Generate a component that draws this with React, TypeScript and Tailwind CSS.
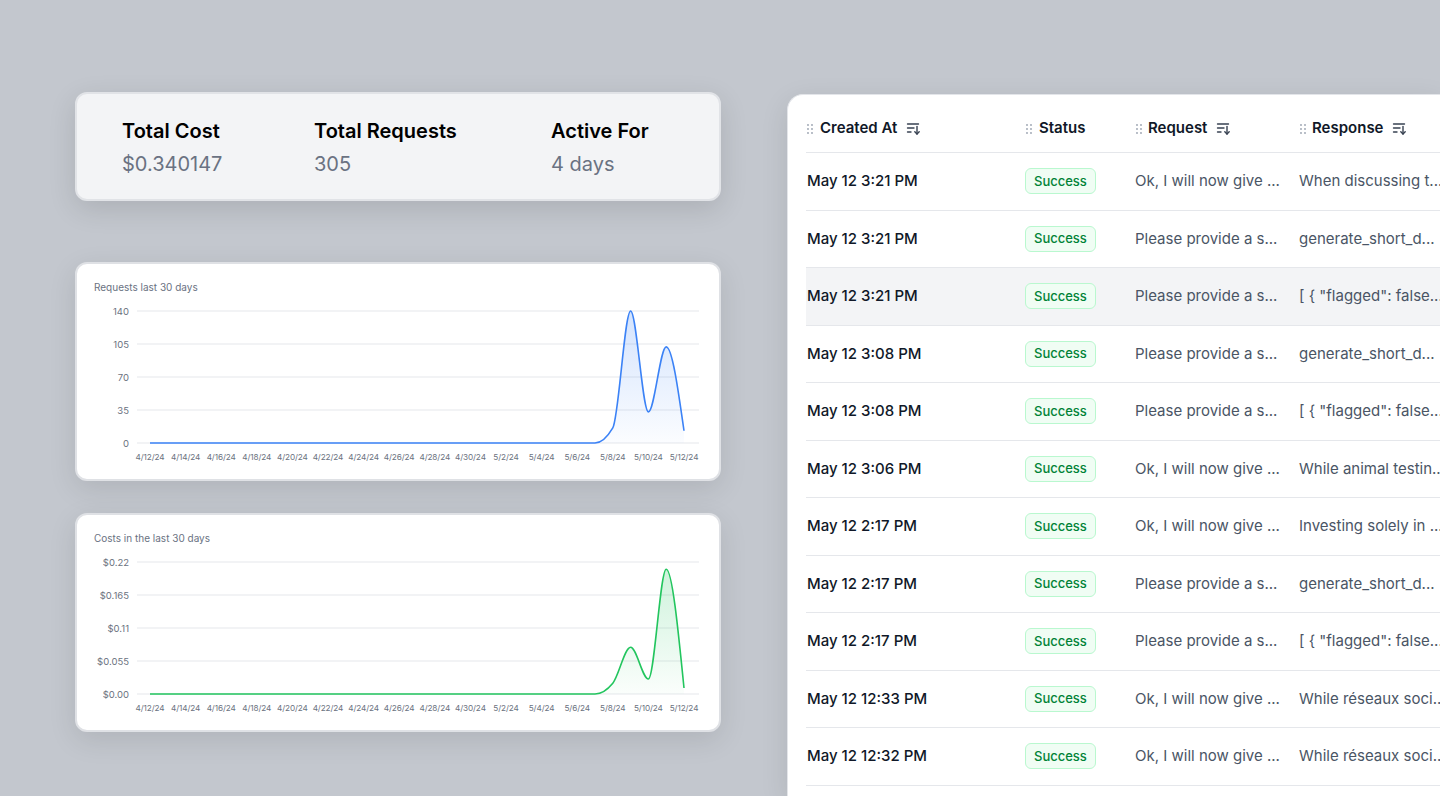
import React from 'react';

type Pt = [number, number];

// monotone cubic, same idea as d3's curveMonotoneX
function monotonePath(pts: Pt[]) {
    const n = pts.length;
    const s: number[] = [];
    for (let i = 0; i < n - 1; i++) s.push((pts[i + 1][1] - pts[i][1]) / (pts[i + 1][0] - pts[i][0]));
    const t: number[] = new Array(n).fill(0);
    for (let i = 1; i < n - 1; i++) {
        const s0 = s[i - 1], s1 = s[i];
        const h0 = pts[i][0] - pts[i - 1][0], h1 = pts[i + 1][0] - pts[i][0];
        const p = (s0 * h1 + s1 * h0) / (h0 + h1);
        t[i] = (Math.sign(s0) + Math.sign(s1)) * Math.min(Math.abs(s0), Math.abs(s1), 0.5 * Math.abs(p)) || 0;
    }
    t[0] = (3 * s[0] - t[1]) / 2;
    t[n - 1] = (3 * s[n - 2] - t[n - 2]) / 2;
    let d = `M${pts[0][0]},${pts[0][1]}`;
    for (let i = 0; i < n - 1; i++) {
        const dx = (pts[i + 1][0] - pts[i][0]) / 3;
        d += ` C${pts[i][0] + dx},${pts[i][1] + dx * t[i]} ${pts[i + 1][0] - dx},${pts[i + 1][1] - dx * t[i + 1]} ${pts[i + 1][0]},${pts[i + 1][1]}`;
    }
    return d;
}

const dateLabels = ['4/12/24', '4/14/24', '4/16/24', '4/18/24', '4/20/24', '4/22/24', '4/24/24', '4/26/24', '4/28/24', '4/30/24', '5/2/24', '5/4/24', '5/6/24', '5/8/24', '5/10/24', '5/12/24'];

const requestData = (() => {
    const a = new Array(31).fill(0);
    a[26] = 16; a[27] = 140; a[28] = 33; a[29] = 102; a[30] = 13;
    return a;
})();

const costData = (() => {
    const a = new Array(31).fill(0);
    a[26] = 0.018; a[27] = 0.078; a[28] = 0.025; a[29] = 0.208; a[30] = 0.01;
    return a;
})();

const X0 = 73;
const STEP = 17.8;
const TOP = 17;
const BASE = 149;

function Chart({ title, data, max, ticks, color, id }: {
    title: string; data: number[]; max: number; ticks: string[]; color: string; id: string;
}) {
    const pts: Pt[] = data.map((v, i) => [X0 + i * STEP, BASE - (v / max) * (BASE - TOP)]);
    const line = monotonePath(pts);
    const area = `${line} L${pts[pts.length - 1][0]},${BASE} L${pts[0][0]},${BASE} Z`;
    const gap = (BASE - TOP) / (ticks.length - 1);

    return (
        <div className="bg-white border-2 border-[#dfe1e5] rounded-xl shadow-[0_8px_28px_rgba(0,0,0,0.10)] h-[219px]">
            <div className="pt-[16px] pl-[17px] text-[10px] leading-[14px] text-gray-500">{title}</div>
            <svg width="642" height="182" viewBox="0 0 642 182" className="block">
                <defs>
                    <linearGradient id={id} x1="0" y1="0" x2="0" y2="1">
                        <stop offset="0%" stopColor={color} stopOpacity="0.22" />
                        <stop offset="100%" stopColor={color} stopOpacity="0.02" />
                    </linearGradient>
                </defs>
                {ticks.map((tk, i) => {
                    const y = TOP + i * gap;
                    return (
                        <g key={tk}>
                            <line x1="60" x2="622" y1={y} y2={y} stroke="#e5e7eb" strokeWidth="1" />
                            <text x="52" y={y + 3.5} textAnchor="end" fontSize="9.5" fill="#6b7280">{tk}</text>
                        </g>
                    );
                })}
                <path d={area} fill={`url(#${id})`} />
                <path d={line} fill="none" stroke={color} strokeWidth="1.6" />
                {dateLabels.map((d, i) => (
                    <text key={d} x={X0 + i * 2 * STEP} y="166" textAnchor="middle" fontSize="8.2" letterSpacing="-0.1" fill="#6b7280">{d}</text>
                ))}
            </svg>
        </div>
    );
}

function Grip() {
    return (
        <svg width="6" height="10" viewBox="0 0 6 10" className="shrink-0 text-gray-400" fill="currentColor">
            <circle cx="1" cy="1" r="0.9" />
            <circle cx="5" cy="1" r="0.9" />
            <circle cx="1" cy="5" r="0.9" />
            <circle cx="5" cy="5" r="0.9" />
            <circle cx="1" cy="9" r="0.9" />
            <circle cx="5" cy="9" r="0.9" />
        </svg>
    );
}

function SortIcon() {
    return (
        <svg width="15" height="15" viewBox="0 0 15 15" fill="none" stroke="#374151" strokeWidth="1.4" strokeLinecap="round" className="shrink-0">
            <path d="M1.5 3h11" />
            <path d="M1.5 7h6.5" />
            <path d="M1.5 11h3.5" />
            <path d="M11 5.5v7.5" />
            <path d="M8.8 10.8l2.2 2.2 2.2-2.2" />
        </svg>
    );
}

const rows = [
    { at: 'May 12 3:21 PM', req: 'Ok, I will now give ...', res: 'When discussing t...' },
    { at: 'May 12 3:21 PM', req: 'Please provide a s...', res: 'generate_short_d...' },
    { at: 'May 12 3:21 PM', req: 'Please provide a s...', res: '[ { "flagged": false...', active: true },
    { at: 'May 12 3:08 PM', req: 'Please provide a s...', res: 'generate_short_d...' },
    { at: 'May 12 3:08 PM', req: 'Please provide a s...', res: '[ { "flagged": false...' },
    { at: 'May 12 3:06 PM', req: 'Ok, I will now give ...', res: 'While animal testin...' },
    { at: 'May 12 2:17 PM', req: 'Ok, I will now give ...', res: 'Investing solely in ...' },
    { at: 'May 12 2:17 PM', req: 'Please provide a s...', res: 'generate_short_d...' },
    { at: 'May 12 2:17 PM', req: 'Please provide a s...', res: '[ { "flagged": false...' },
    { at: 'May 12 12:33 PM', req: 'Ok, I will now give ...', res: 'While réseaux soci...' },
    { at: 'May 12 12:32 PM', req: 'Ok, I will now give ...', res: 'While réseaux soci...' },
    { at: 'May 12 12:30 PM', req: 'Ok, I will now give ...', res: 'While réseaux soci...' },
];

function App() {
    return (
        <div className="h-[796px] w-[1440px] overflow-hidden bg-[#c3c7ce] font-[Inter,'Noto_Sans',sans-serif] flex pl-[75px] pt-[92px]">
            <div className="w-[646px] shrink-0 flex flex-col">
                <div className="bg-[#f3f4f6] border-2 border-[#e1e3e7] rounded-xl shadow-[0_8px_28px_rgba(0,0,0,0.12)] h-[109px] flex pl-[45px] pt-[23px]">
                    <div className="w-[192px]">
                        <div className="text-[20px] leading-[28px] font-semibold text-black">Total Cost</div>
                        <div className="mt-[5px] text-[20px] leading-[28px] text-gray-500">$0.340147</div>
                    </div>
                    <div className="w-[237px]">
                        <div className="text-[20px] leading-[28px] font-semibold text-black">Total Requests</div>
                        <div className="mt-[5px] text-[20px] leading-[28px] text-gray-500">305</div>
                    </div>
                    <div>
                        <div className="text-[20px] leading-[28px] font-semibold text-black">Active For</div>
                        <div className="mt-[5px] text-[20px] leading-[28px] text-gray-500">4 days</div>
                    </div>
                </div>

                <div className="mt-[61px]">
                    <Chart
                        title="Requests last 30 days"
                        data={requestData}
                        max={140}
                        ticks={['140', '105', '70', '35', '0']}
                        color="#3b82f6"
                        id="reqGrad"
                    />
                </div>
                <div className="mt-[32px]">
                    <Chart
                        title="Costs in the last 30 days"
                        data={costData}
                        max={0.22}
                        ticks={['$0.22', '$0.165', '$0.11', '$0.055', '$0.00']}
                        color="#22c55e"
                        id="costGrad"
                    />
                </div>
            </div>

            <div className="ml-[66px] mt-[2px] flex-1 min-w-0 bg-white border-l border-t border-[#e3e5e9] rounded-tl-2xl shadow-[0_8px_28px_rgba(0,0,0,0.10)] overflow-hidden pl-[18px]">
                <div className="w-[640px]">
                    <div className="flex items-center h-[58px] pt-[10px] border-b border-gray-200 text-[15px] font-semibold text-gray-900 whitespace-nowrap">
                        <div className="w-[219px] pl-[1px] flex items-center">
                            <Grip />
                            <span className="ml-[7px]">Created At</span>
                            <span className="ml-[9px]"><SortIcon /></span>
                        </div>
                        <div className="w-[110px] pl-[1px] flex items-center">
                            <Grip />
                            <span className="ml-[7px]">Status</span>
                        </div>
                        <div className="w-[164px] pl-[1px] flex items-center">
                            <Grip />
                            <span className="ml-[6px]">Request</span>
                            <span className="ml-[9px]"><SortIcon /></span>
                        </div>
                        <div className="pl-[1px] flex items-center">
                            <Grip />
                            <span className="ml-[6px]">Response</span>
                            <span className="ml-[9px]"><SortIcon /></span>
                        </div>
                    </div>
                    {rows.map((r, i) => (
                        <div
                            key={i}
                            className={`flex items-center h-[57.5px] border-b border-gray-200 text-[15px] whitespace-nowrap ${r.active ? 'bg-gray-100' : ''}`}
                        >
                            <div className="w-[219px] pl-[1px] font-medium text-gray-900">{r.at}</div>
                            <div className="w-[110px]">
                                <span className="inline-flex items-center h-[26px] px-[8px] rounded-md border border-green-200 bg-green-50 text-[13px] font-medium text-green-700">
                                    Success
                                </span>
                            </div>
                            <div className="w-[164px] text-gray-600">{r.req}</div>
                            <div className="text-gray-600">{r.res}</div>
                        </div>
                    ))}
                </div>
            </div>
        </div>
    );
}

export default App;
